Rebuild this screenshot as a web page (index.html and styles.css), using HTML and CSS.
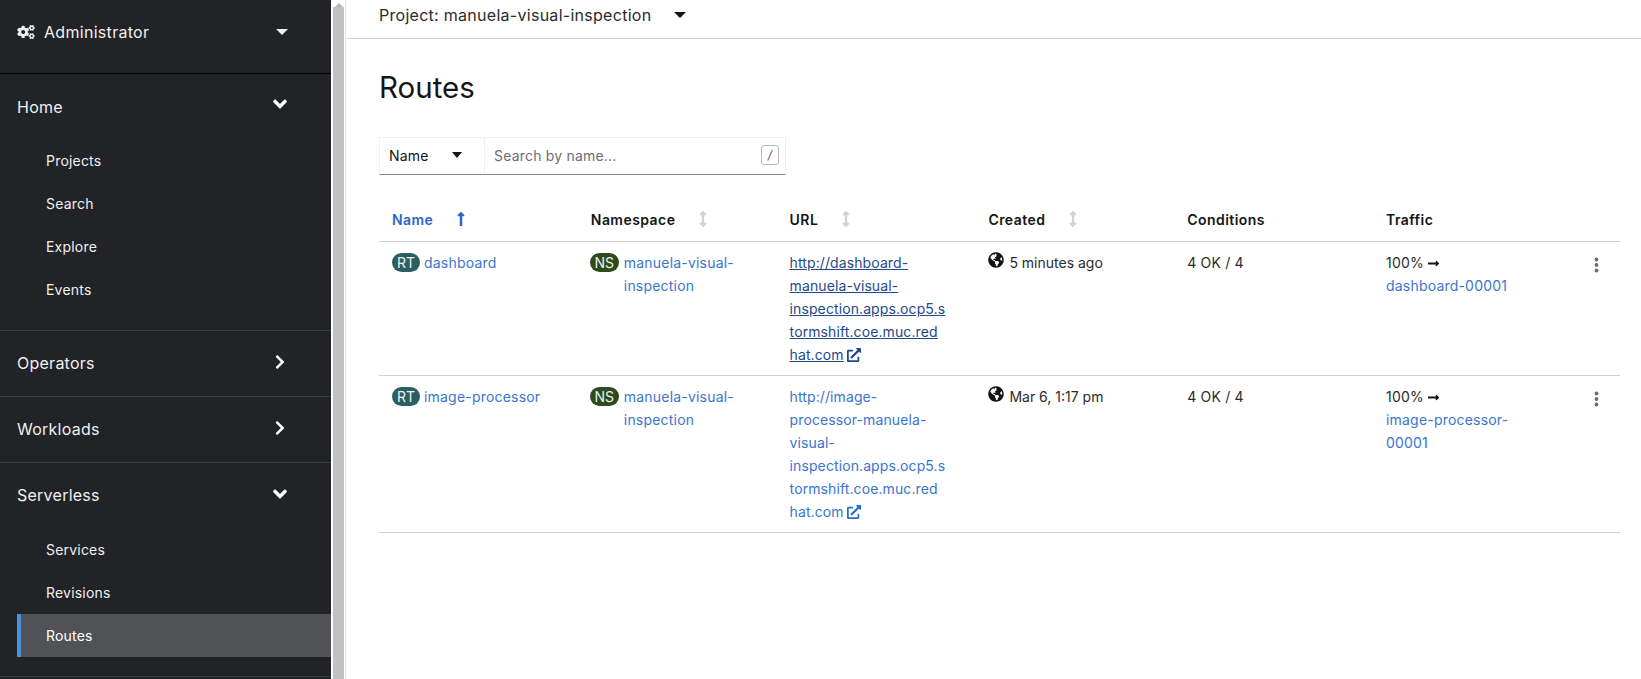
FILE: index.html
```html
<!DOCTYPE html>
<html lang="en">
<head>
<meta charset="utf-8">
<title>Routes</title>
<link rel="stylesheet" href="styles.css">
</head>
<body>
<svg class="defs" aria-hidden="true">
  <symbol id="i-down" viewBox="0 0 320 512"><path d="M143 352.300L7 216.300c-9.400-9.400-9.400-24.600 0-33.900l22.600-22.600c9.400-9.400 24.600-9.400 33.900 0l96.400 96.400 96.400-96.400c9.400-9.400 24.600-9.400 33.900 0l22.600 22.600c9.400 9.400 9.400 24.600 0 33.900l-136 136c-9.200 9.400-24.400 9.400-33.800 0z"/></symbol>
  <symbol id="i-right" viewBox="0 0 320 512"><path d="M285.476 272.971L91.132 467.314c-9.373 9.373-24.569 9.373-33.941 0l-22.667-22.667c-9.357-9.357-9.375-24.522-.04-33.901L188.505 256 34.484 101.255c-9.335-9.379-9.317-24.544.04-33.901l22.667-22.667c9.373-9.373 24.569-9.373 33.941 0L285.475 239.030c9.373 9.372 9.373 24.568.001 33.941z"/></symbol>
  <symbol id="i-sort" viewBox="0 0 256 512"><path d="M214.059 377.941H168V134.059h46.059c21.382 0 32.090-25.851 16.971-40.971L144.971 7.029c-9.373-9.373-24.569-9.373-33.941 0L24.971 93.088c-15.119 15.119-4.411 40.971 16.971 40.971H88v243.882H41.941c-21.382 0-32.090 25.851-16.971 40.971l86.059 86.059c9.373 9.373 24.569 9.373 33.941 0l86.059-86.059c15.120-15.119 4.412-40.971-16.970-40.971z"/></symbol>
  <symbol id="i-up" viewBox="0 0 256 512"><path d="M88 166.059V468c0 6.627 5.373 12 12 12h56c6.627 0 12-5.373 12-12V166.059h46.059c21.382 0 32.090-25.851 16.971-40.971l-86.059-86.059c-9.373-9.373-24.569-9.373-33.941 0l-86.059 86.059c-15.119 15.119-4.411 40.971 16.971 40.971H88z"/></symbol>
  <symbol id="i-ext" viewBox="0 0 512 512"><path d="M432 320h-32a16 16 0 0 0-16 16v112H64V128h144a16 16 0 0 0 16-16V80a16 16 0 0 0-16-16H48A48 48 0 0 0 0 112v352a48 48 0 0 0 48 48h352a48 48 0 0 0 48-48V336a16 16 0 0 0-16-16zM488 0H360c-21.370 0-32.050 25.910-17 41l35.730 35.730L135 320.370a24 24 0 0 0 0 34L157.670 377a24 24 0 0 0 34 0l243.610-243.680L471 169c15 15 41 4.500 41-17V24a24 24 0 0 0-24-24z"/></symbol>
  <symbol id="i-globe" viewBox="0 0 496 512"><path d="M248 8C111.030 8 0 119.030 0 256s111.030 248 248 248 248-111.030 248-248S384.970 8 248 8zm82.290 357.600c-3.900 3.880-7.990 7.950-11.310 11.280-2.990 3-5.100 6.700-6.170 10.710-1.510 5.660-2.730 11.380-4.770 16.870l-17.390 46.850c-13.760 3-28 4.690-42.650 4.690v-27.380c1.690-12.620-7.640-36.260-22.630-51.250-6-6-9.370-14.140-9.370-22.630v-32.010c0-11.640-6.270-22.340-16.460-27.970-14.370-7.950-34.810-19.060-48.810-26.110-11.480-5.780-22.100-13.140-31.650-21.750l-.8-.72a114.792 114.792 0 0 1-18.060-20.740c-9.380-13.770-24.660-36.420-34.590-51.140 20.470-45.500 57.360-82.040 103.200-101.890l24.010 12.010C203.480 89.740 216 82.010 216 70.110v-11.300c7.990-1.290 16.120-2.110 24.390-2.420l28.300 28.300c6.250 6.250 6.250 16.380 0 22.630L264 112l-10.340 10.340c-3.120 3.120-3.120 8.190 0 11.310l4.690 4.690c3.120 3.120 3.120 8.190 0 11.310l-8 8a8.008 8.008 0 0 1-5.660 2.340h-8.990c-2.080 0-4.080.81-5.580 2.270l-9.920 9.650a8.008 8.008 0 0 0-1.580 9.310l15.590 31.190c2.660 5.320-1.210 11.580-7.150 11.580h-5.640c-1.930 0-3.790-.7-5.240-1.960l-9.280-8.060a16.017 16.017 0 0 0-15.550-3.100l-31.170 10.390a11.950 11.950 0 0 0-8.170 11.340c0 4.530 2.560 8.660 6.610 10.690l11.080 5.540c9.410 4.710 19.790 7.160 30.310 7.160s22.590 27.290 32 32h66.750c8.490 0 16.620 3.370 22.630 9.370l13.690 13.690a30.503 30.503 0 0 1 8.930 21.570 46.536 46.536 0 0 1-13.720 32.980zM417 274.250c-5.790-1.450-10.840-5-14.150-9.970l-17.980-26.970a23.970 23.970 0 0 1 0-26.620l19.590-29.380c2.320-3.470 5.500-6.290 9.240-8.150l12.980-6.490C440.200 193.590 448 223.870 448 256c0 8.670-.74 17.160-1.820 25.540L417 274.250z"/></symbol>
  <symbol id="i-arrow" viewBox="0 0 448 512"><path d="M313.941 216H12c-6.627 0-12 5.373-12 12v56c0 6.627 5.373 12 12 12h301.941v46.059c0 21.382 25.851 32.090 40.971 16.971l86.059-86.059c9.373-9.373 9.373-24.569 0-33.941l-86.059-86.059c-15.119-15.119-40.971-4.411-40.971 16.971V216z"/></symbol>
</svg>
<div class="app">
  <nav class="sidebar">
    <div class="perspective">
      <svg class="cogs" viewBox="0 0 640 512"><path fill="currentColor" d="M512.1 191l-8.2 14.3c-3 5.3-9.4 7.5-15.1 5.4-11.8-4.4-22.6-10.7-32.1-18.6-4.6-3.8-5.8-10.5-2.8-15.7l8.2-14.3c-6.9-8-12.3-17.3-15.9-27.4h-16.5c-6 0-11.2-4.3-12.2-10.3-2-12-2.1-24.6 0-37.1 1-6 6.2-10.4 12.2-10.4h16.5c3.6-10.1 9-19.4 15.9-27.4l-8.2-14.3c-3-5.2-1.9-11.9 2.8-15.7 9.5-7.9 20.4-14.2 32.1-18.6 5.7-2.1 12.1.1 15.1 5.4l8.2 14.3c10.5-1.9 21.2-1.9 31.7 0L552 6.3c3-5.3 9.4-7.5 15.1-5.4 11.8 4.4 22.6 10.7 32.1 18.6 4.6 3.8 5.8 10.5 2.8 15.7l-8.2 14.3c6.9 8 12.3 17.3 15.9 27.4h16.5c6 0 11.2 4.3 12.2 10.3 2 12 2.1 24.6 0 37.1-1 6-6.2 10.4-12.2 10.4h-16.5c-3.6 10.1-9 19.4-15.9 27.4l8.2 14.3c3 5.2 1.9 11.9-2.8 15.7-9.5 7.9-20.4 14.2-32.1 18.6-5.7 2.1-12.1-.1-15.1-5.4l-8.2-14.3c-10.4 1.9-21.2 1.9-31.7 0zm-10.5-58.8c38.5 29.6 82.4-14.3 52.8-52.8-38.5-29.7-82.4 14.3-52.8 52.8zM386.3 286.1l33.7 16.8c10.1 5.8 14.5 18.1 10.5 29.1-8.9 24.2-26.4 46.4-42.6 65.8-7.4 8.9-20.2 11.1-30.3 5.3l-29.1-16.8c-16 13.7-34.6 24.6-54.9 31.7v33.6c0 11.6-8.3 21.6-19.7 23.6-24.6 4.2-50.4 4.4-75.9 0-11.5-2-20-11.9-20-23.6V418c-20.3-7.2-38.9-18-54.9-31.7L74 403c-10 5.8-22.9 3.6-30.3-5.3-16.2-19.4-33.3-41.6-42.2-65.7-4-10.9.4-23.2 10.5-29.1l33.3-16.8c-3.9-20.9-3.9-42.4 0-63.4L12 205.8c-10.1-5.8-14.6-18.1-10.5-29 8.9-24.2 26-46.4 42.2-65.8 7.4-8.9 20.2-11.1 30.3-5.3l29.1 16.8c16-13.7 34.6-24.6 54.9-31.7V57.1c0-11.5 8.2-21.5 19.6-23.5 24.6-4.2 50.5-4.4 76-.1 11.5 2 20 11.9 20 23.6v33.6c20.3 7.2 38.9 18 54.9 31.7l29.1-16.8c10-5.8 22.9-3.6 30.3 5.3 16.2 19.4 33.2 41.6 42.1 65.8 4 10.9.1 23.2-10 29.1l-33.7 16.8c3.9 21 3.9 42.5 0 63.5zm-117.6 21.1c59.2-77-28.7-164.9-105.7-105.7-59.2 77 28.7 164.9 105.7 105.7zm243.4 182.7l-8.2 14.3c-3 5.3-9.4 7.5-15.1 5.4-11.8-4.4-22.6-10.7-32.1-18.6-4.6-3.8-5.8-10.5-2.8-15.7l8.2-14.3c-6.9-8-12.3-17.3-15.9-27.4h-16.5c-6 0-11.2-4.3-12.2-10.3-2-12-2.1-24.6 0-37.1 1-6 6.2-10.4 12.2-10.4h16.5c3.6-10.1 9-19.4 15.9-27.4l-8.2-14.3c-3-5.2-1.9-11.9 2.8-15.7 9.5-7.9 20.4-14.2 32.1-18.6 5.7-2.1 12.1.1 15.1 5.4l8.2 14.3c10.5-1.9 21.2-1.9 31.7 0l8.2-14.3c3-5.3 9.4-7.5 15.1-5.4 11.8 4.4 22.6 10.7 32.1 18.6 4.6 3.8 5.8 10.5 2.8 15.7l-8.2 14.3c6.9 8 12.3 17.3 15.9 27.4h16.5c6 0 11.2 4.3 12.2 10.3 2 12 2.1 24.6 0 37.1-1 6-6.2 10.4-12.2 10.4h-16.5c-3.6 10.1-9 19.4-15.9 27.4l8.2 14.3c3 5.2 1.9 11.9-2.8 15.7-9.5 7.9-20.4 14.2-32.1 18.6-5.7 2.1-12.1-.1-15.1-5.4l-8.2-14.3c-10.4 1.9-21.2 1.9-31.7 0zM501.6 431c38.5 29.6 82.4-14.3 52.8-52.8-38.5-29.6-82.4 14.3-52.8 52.8z"/></svg>
      <span class="perspective-label">Administrator</span>
      <span class="caret caret-light"></span>
    </div>

    <div class="group group-home">
      <div class="group-head"><span>Home</span>
        <svg class="chev"><use href="#i-down"/></svg></div>
      <ul class="sub">
        <li>Projects</li><li>Search</li><li>Explore</li><li>Events</li>
      </ul>
    </div>
    <div class="group group-closed">
      <div class="group-head"><span>Operators</span>
        <svg class="chev-right"><use href="#i-right"/></svg></div>
    </div>
    <div class="group group-closed">
      <div class="group-head"><span>Workloads</span>
        <svg class="chev-right"><use href="#i-right"/></svg></div>
    </div>
    <div class="group group-serverless">
      <div class="group-head"><span>Serverless</span>
        <svg class="chev"><use href="#i-down"/></svg></div>
      <ul class="sub">
        <li>Services</li><li>Revisions</li><li class="current">Routes</li>
      </ul>
    </div>
  </nav>

  <div class="scrollbar"><span class="scroll-arrow"></span><span class="scroll-thumb"></span></div>

  <main class="main">
    <div class="project-bar">
      <span class="project-name">Project: manuela-visual-inspection</span>
      <span class="caret caret-dark caret-wide"></span>
    </div>
    <div class="content">
      <h1 class="title">Routes</h1>
      <div class="filter">
        <div class="filter-type"><span>Name</span><span class="caret caret-dark"></span></div>
        <div class="filter-search"><span class="placeholder">Search by name...</span><span class="kbd">/</span></div>
      </div>
      <table class="table">
        <colgroup>
          <col class="col"><col class="col"><col class="col"><col class="col"><col class="col"><col class="col"><col class="col-kebab">
        </colgroup>
        <thead>
          <tr>
            <th class="sorted">Name<svg class="sort sort-up"><use href="#i-up"/></svg></th>
            <th>Namespace<svg class="sort"><use href="#i-sort"/></svg></th>
            <th>URL<svg class="sort"><use href="#i-sort"/></svg></th>
            <th>Created<svg class="sort"><use href="#i-sort"/></svg></th>
            <th>Conditions</th>
            <th>Traffic</th>
            <th></th>
          </tr>
        </thead>
        <tbody>
          <tr>
            <td><span class="badge badge-rt">RT</span><a class="link">dashboard</a></td>
            <td><div class="ns"><span class="badge badge-ns">NS</span><a class="link">manuela-visual-inspection</a></div></td>
            <td><a class="url url-hover">http://dashboard-manuela-visual-inspection.apps.ocp5.stormshift.coe.muc.redhat.com</a><svg class="ext ext-hover"><use href="#i-ext"/></svg></td>
            <td><div class="created"><svg class="globe"><use href="#i-globe"/></svg><span>5 minutes ago</span></div></td>
            <td>4 OK / 4</td>
            <td><div class="traffic">100% <svg class="arrow"><use href="#i-arrow"/></svg></div><a class="link">dashboard-00001</a></td>
            <td class="kebab-cell"><svg class="kebab" viewBox="0 0 4 16"><circle cx="2" cy="2.500" r="1.900"/><circle cx="2" cy="8" r="1.900"/><circle cx="2" cy="13.500" r="1.900"/></svg></td>
          </tr>
          <tr>
            <td><span class="badge badge-rt">RT</span><a class="link">image-processor</a></td>
            <td><div class="ns"><span class="badge badge-ns">NS</span><a class="link">manuela-visual-inspection</a></div></td>
            <td><a class="url">http://image-processor-manuela-visual-inspection.apps.ocp5.stormshift.coe.muc.redhat.com</a><svg class="ext"><use href="#i-ext"/></svg></td>
            <td><div class="created"><svg class="globe"><use href="#i-globe"/></svg><span>Mar 6, 1:17 pm</span></div></td>
            <td>4 OK / 4</td>
            <td><div class="traffic">100% <svg class="arrow"><use href="#i-arrow"/></svg></div><a class="link">image-processor-00001</a></td>
            <td class="kebab-cell"><svg class="kebab" viewBox="0 0 4 16"><circle cx="2" cy="2.500" r="1.900"/><circle cx="2" cy="8" r="1.900"/><circle cx="2" cy="13.500" r="1.900"/></svg></td>
          </tr>
        </tbody>
      </table>
    </div>
  </main>
</div>
</body>
</html>
```
FILE: styles.css
```css
* { box-sizing: border-box; }
html, body { margin: 0; height: 100%; overflow: hidden; }
body { font-family: Inter, "Noto Sans", sans-serif; color: #151515; background: #fff; font-size: 14px; letter-spacing: .2px; }
.defs { display: none; }
.app { display: flex; height: 679px; overflow: hidden; }

.sidebar { width: 331px; flex: none; background: #212327; color: #f0f0f0; height: 679px; overflow: hidden; }
.perspective { height: 74px; border-bottom: 1px solid #030303; display: flex; align-items: center; padding: 0 40px 10px 17px; font-size: 16px; letter-spacing: .3px; }
.cogs { width: 18px; height: 14px; color: #f0f0f0; flex: none; }
.perspective-label { margin-left: 9px; flex: 1; }
.caret { display: inline-block; width: 0; height: 0; border-left: 5px solid transparent; border-right: 5px solid transparent; }
.caret-light { border-top: 6px solid #f0f0f0; margin-right: 3px; border-left-width: 6px; border-right-width: 6px; }
.caret-dark { border-top: 6px solid #151515; }
.caret-wide { border-left-width: 6px; border-right-width: 6px; }

.group { border-bottom: 1px solid #3c3f42; }
.group-head { display: flex; justify-content: space-between; align-items: center; padding: 0 44px 0 17px; font-size: 16px; height: 63px; letter-spacing: .25px; }
.chev { width: 14px; height: 22px; margin-top: -1px; fill: #fff; }
.chev-right { width: 10px; height: 16px; margin: -1px 2px 0 0; fill: #fff; }
.group-home { height: 257px; }
.group-home .group-head { height: 66px; }
.group-home .chev { margin-top: -6px; }
.group-closed { height: 66px; }
.group-serverless { height: 214px; }
.sub { list-style: none; margin: 0; padding: 0 0 0 17px; font-size: 14px; }
.sub li { height: 43px; line-height: 43px; padding-left: 29px; }
.group-home .sub { margin-top: -1px; }
.group-serverless .sub { margin-top: 2px; }
.sub li.current { background: #515255; border-left: 4px solid #4a90e2; padding-left: 25px; color: #fff; }

.scrollbar { width: 14px; flex: none; background: #fff; padding: 0 1px 0 2px; display: flex; flex-direction: column; }
.scroll-arrow { height: 7px; flex: none; width: 0; margin-left: 2px; border-left: 4px solid transparent; border-right: 4px solid transparent; border-bottom: 4px solid #b5b5b5; }
.scroll-thumb { flex: 1; background: #c1c1c1; }

.main { flex: 1; min-width: 0; border-left: 1px solid #e4e4e4; }
.project-bar { height: 39px; border-bottom: 1px solid #d2d2d2; display: flex; align-items: center; padding: 0 0 8px 33px; font-size: 16px; color: #2b2b2b; letter-spacing: .28px; }
.project-name { margin-right: 23px; }
.content { padding: 0 20px 0 33px; }
.title { font-size: 29.500px; font-weight: 400; margin: 27px 0 0; line-height: 42px; color: #151515; letter-spacing: 0; }
.filter { display: flex; width: 407px; height: 38px; margin-top: 29px; border: 1px solid #f0f0f0; border-bottom: 1px solid #8a8d90; }
.filter-type { width: 105px; display: flex; align-items: center; justify-content: space-between; padding: 0 22px 2px 9px; border-right: 1px solid #f0f0f0; }
.filter-search { flex: 1; display: flex; align-items: center; justify-content: space-between; padding: 0 6px 2px 9px; }
.placeholder { color: #6a6e73; }
.kbd { width: 18px; height: 20px; border: 1px solid #b8bbbe; border-radius: 3px; text-align: center; font-size: 12px; line-height: 18px; color: #555; font-style: italic; }

.table { width: 1241px; border-collapse: collapse; table-layout: fixed; margin-top: 24px; }
.col { width: 198.800px; }
th { text-align: left; font-weight: 600; font-size: 14px; height: 42px; padding: 0 13px; border-bottom: 1px solid #d2d2d2; vertical-align: middle; white-space: nowrap; letter-spacing: .45px; }
th.sorted { color: #2b66c4; }
.sort { width: 8px; height: 16px; margin-left: 24px; fill: #d2d2d2; vertical-align: -2px; }
.sort-up { fill: #2b66c4; }
td { vertical-align: top; padding: 9px 30px 9px 13px; line-height: 23px; border-bottom: 1px solid #d2d2d2; color: #2b2b2b; }
.link { color: #3a75cf; }
.badge { display: inline-block; height: 19px; line-height: 19px; border-radius: 10px; color: #f0f0f0; text-align: center; font-size: 14px; width: 28px; margin-right: 4px; letter-spacing: 0; }
.badge-rt { background: #2b5f62; }
.badge-ns { background: #2e4a1f; }
.ns { display: flex; align-items: flex-start; }
.ns .badge { flex: none; width: 29px; margin: 2px 5px 0 -1px; }
.url { color: #3a75cf; overflow-wrap: anywhere; letter-spacing: .1px; }
.url-hover { color: #1f4a87; text-decoration: underline; }
.ext { width: 14px; height: 14px; margin-left: 3px; fill: #2f6fc8; vertical-align: -2px; }
.ext-hover { fill: #1f4a87; }
.created { display: flex; align-items: flex-start; letter-spacing: 0; }
.globe { width: 16px; height: 16px; flex: none; margin: 1px 5px 0 0; fill: #151515; }
.arrow { width: 11px; height: 13px; fill: #151515; vertical-align: -2px; }
.kebab-cell { padding-left: 0; padding-right: 0; }
.kebab { display: block; width: 5px; height: 16px; margin: 6px 0 0 22px; fill: #6a6e73; }
```
